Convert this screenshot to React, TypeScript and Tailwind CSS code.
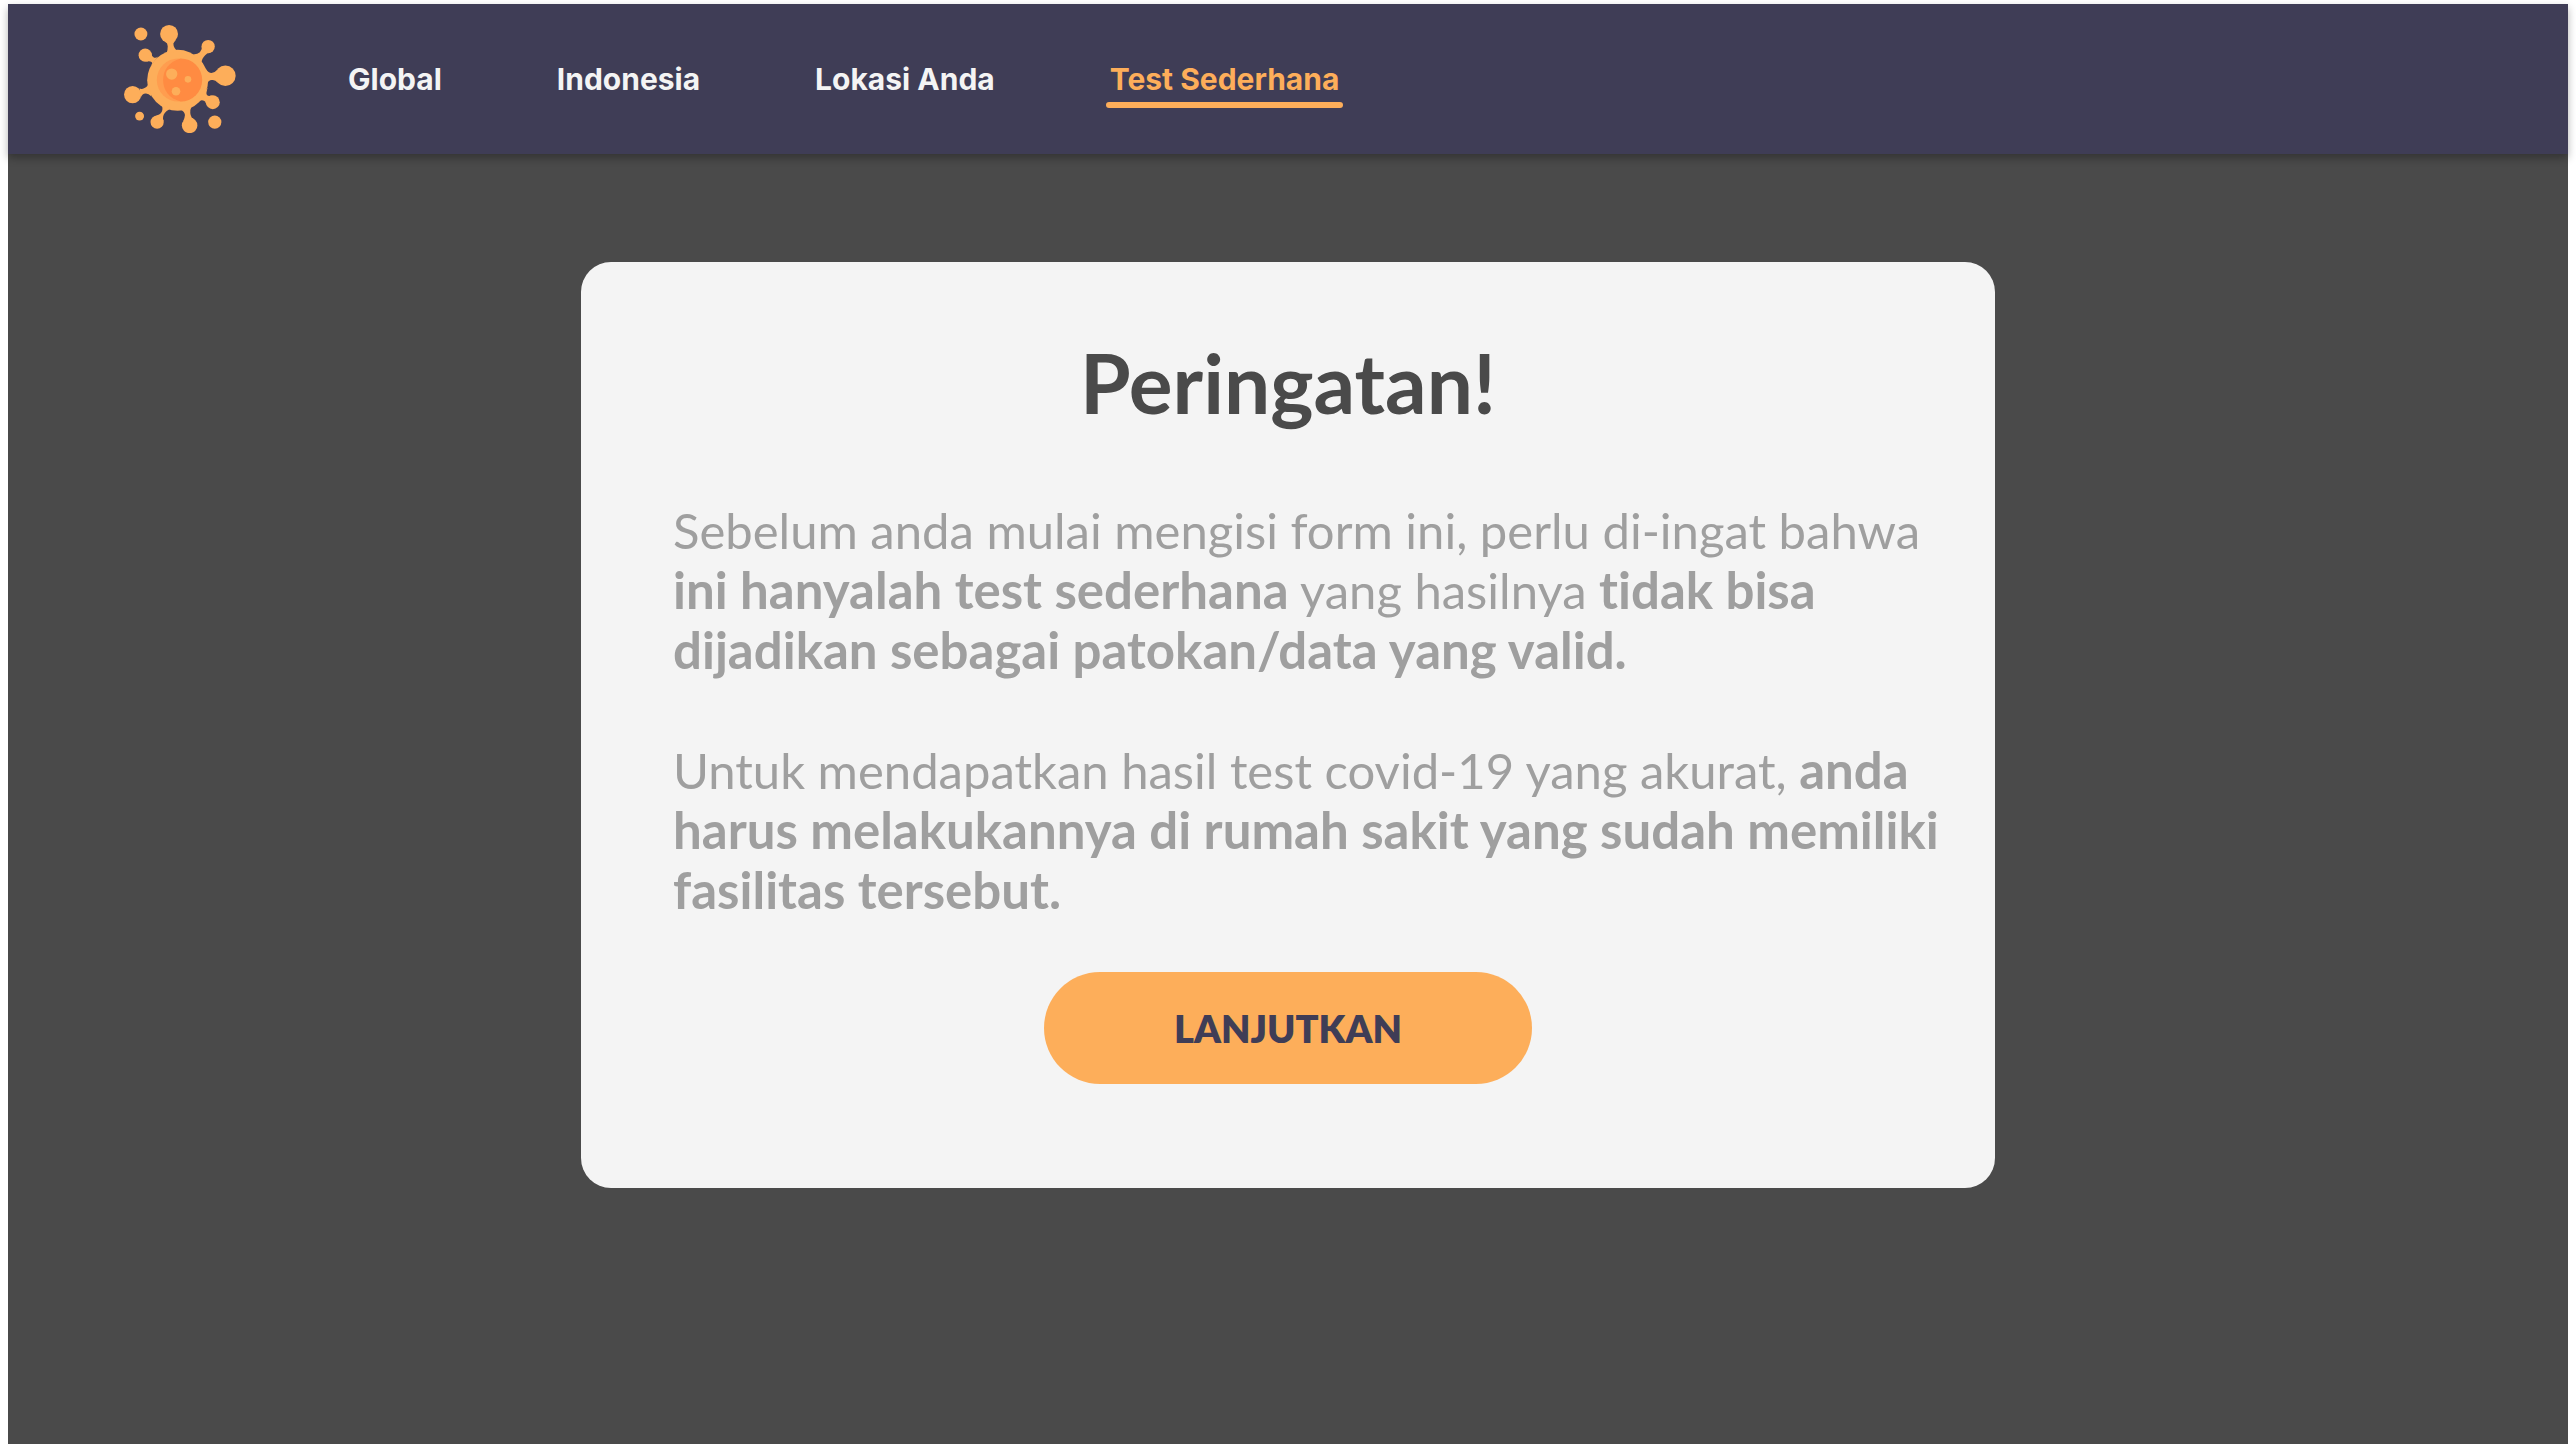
const links = [
  { label: "Global", href: "#global", active: false },
  { label: "Indonesia", href: "#indonesia", active: false },
  { label: "Lokasi Anda", href: "#lokasi", active: false },
  { label: "Test Sederhana", href: "#test", active: true },
];

function VirusLogo() {
  return (
    <svg viewBox="42 42 336 326" className="block h-[108px] w-28" role="img" aria-label="Virus">
      <g fill="#fdae5a">
        <circle cx="92" cy="69" r="19.5" />
        <circle cx="177" cy="69" r="27" />
        <circle cx="295" cy="107" r="20" />
        <circle cx="105" cy="133" r="20" />
        <circle cx="347" cy="195" r="31" />
        <circle cx="67" cy="252" r="26" />
        <circle cx="309" cy="275" r="21" />
        <circle cx="88" cy="317" r="13.5" />
        <circle cx="141" cy="335" r="20" />
        <circle cx="239" cy="345" r="23.5" />
        <circle cx="315" cy="335" r="20" />
        <circle cx="203" cy="209" r="92" />
        <path d="M165 92 Q173 97 173 106 Q173 116 170 126 L204 122 Q190 112 190 98 Q193 92 197 88 Z" />
        <path d="M276 106 Q278 116 270 124 Q264 130 250 131 L274 158 Q276 142 286 133 Q292 126 302 126 Z" />
        <path d="M123 126 Q124 136 131 140 Q136 143 144 137 L120 168 Q129 158 124 154 Q118 150 108 153 Z" />
        <path d="M288 174 Q296 187 305 187 Q314 187 322 178 L324 216 Q316 206 306 208 Q296 208 288 224 Z" />
        <path d="M88 234 Q95 237 103 232 Q112 229 116 216 L124 258 Q114 248 106 249 Q96 250 92 260 Z" />
        <path d="M294 230 Q287 250 292 254 Q297 258 306 254 L289 282 Q288 272 280 270 Q274 266 262 276 Z" />
        <path d="M153 280 Q160 294 155 304 Q150 314 138 315 L160 332 Q156 318 164 308 Q170 300 182 294 Z" />
        <path d="M212 297 Q224 304 225 314 Q224 324 220 332 L257 332 Q242 324 241 308 Q240 298 245 288 Z" />
      </g>
      <circle cx="205" cy="208" r="65" fill="#ff9d4f" />
      <path d="M212 143 A65 65 0 0 1 212 273 C176 263 159 238 159 208 C159 178 176 153 212 143 Z" fill="#ff8b42" />
      <g fill="#fdae5a">
        <circle cx="185" cy="190" r="17" />
        <circle cx="234" cy="206" r="10" />
        <circle cx="198" cy="242" r="13" />
      </g>
    </svg>
  );
}

export default function App() {
  return (
    <div className="flex min-h-screen flex-col bg-white px-2 pt-1 font-['Lato',sans-serif]">
      <header className="relative flex h-[150px] items-center bg-[#3f3d56] pl-[116px] shadow-[0_4px_8px_rgba(0,0,0,0.3)]">
        <a href="#home">
          <VirusLogo />
        </a>
        <nav className="ml-[112px] flex items-center gap-[115px] font-['Inter',sans-serif] text-[30px] leading-10 font-bold">
          {links.map((link) =>
            link.active ? (
              <a key={link.label} href={link.href} aria-current="page" className="relative text-[#fdae5a]">
                {link.label}
                <span className="absolute -inset-x-1 -bottom-[9px] h-[6px] rounded-full bg-[#fdae5a]" />
              </a>
            ) : (
              <a key={link.label} href={link.href} className="text-[#f4f4f4]">
                {link.label}
              </a>
            ),
          )}
        </nav>
      </header>

      <main className="flex-1 bg-[#4a4a4a] px-8 pt-[108px] pb-16">
        <section className="mx-auto flex w-full max-w-[1414px] flex-col items-center rounded-[30px] bg-[#f4f4f4] pt-[72px] pb-[104px]">
          <h1 className="text-[82px] leading-[96px] font-bold text-[#4a4a4a]">Peringatan!</h1>
          <div className="mt-[70px] flex w-full flex-col gap-[60px] pr-8 pl-[92px] text-[49px] leading-[60px] text-[#9f9f9f] [font-variant-ligatures:none] [&_strong]:text-[51px] [&_strong]:leading-none">
            <p>
              Sebelum anda mulai mengisi form ini, perlu di-ingat bahwa <strong>ini hanyalah test sederhana</strong> yang
              hasilnya <strong>tidak bisa dijadikan sebagai patokan/data yang valid.</strong>
            </p>
            <p>
              Untuk mendapatkan hasil test covid-19 yang akurat,{" "}
              <strong>anda harus melakukannya di rumah sakit yang sudah memiliki fasilitas tersebut.</strong>
            </p>
          </div>
          <button
            type="button"
            className="mt-[52px] h-28 w-[488px] rounded-full bg-[#fdae5a] text-[38px] font-extrabold text-[#3f3d56]"
          >
            LANJUTKAN
          </button>
        </section>
      </main>
    </div>
  );
}
